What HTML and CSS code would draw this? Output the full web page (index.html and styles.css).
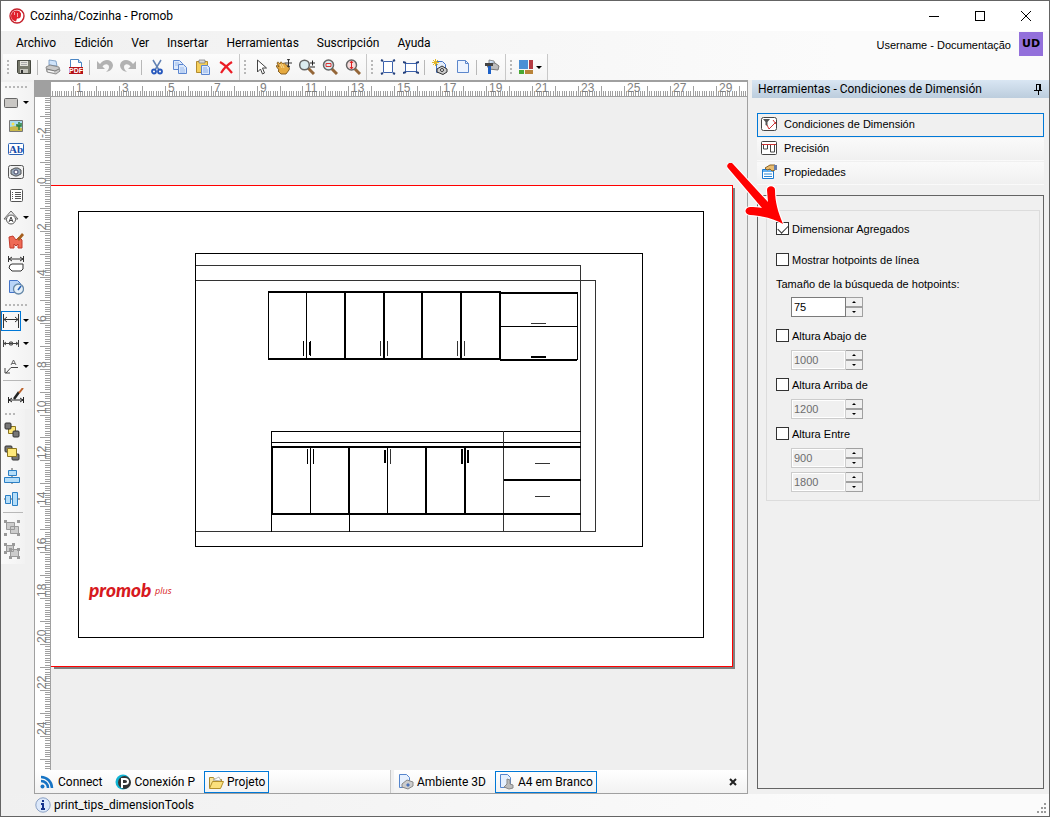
FILE: index.html
```html
<!DOCTYPE html>
<html lang="es">
<head>
    <meta charset="UTF-8">
    <meta name="viewport" content="width=device-width, initial-scale=1.0">
    <title>Cozinha/Cozinha - Promob</title>
    <link rel="stylesheet" href="styles.css">
</head>
<body>
<div class="window">
    <header class="titlebar">
        <svg class="icon" viewBox="0 0 16 16"><circle cx="8" cy="8" r="7" fill="#fff" stroke="#c5202b" stroke-width="1.4"/><path d="M8 2.500a5.500 5.500 0 0 0-1 11l1-3c4 0 4-2 4-5-1-2-2-3-4-3z" fill="#e0222c"/><path d="M8.500 5v4M5.500 4v3" stroke="#f6a5a8"/></svg>
        <h1>Cozinha/Cozinha - Promob</h1>
        <button class="win-btn" aria-label="Minimizar"><svg viewBox="0 0 12 12"><path d="M1 6.500h10" class="line"/></svg></button>
        <button class="win-btn" aria-label="Maximizar"><svg viewBox="0 0 12 12"><path d="M1.500 1.500h9v9h-9z" class="line"/></svg></button>
        <button class="win-btn" aria-label="Cerrar"><svg viewBox="0 0 12 12"><path d="M1 1l10 10M11 1L1 11" class="line smooth"/></svg></button>
    </header>

    <div class="top">
        <div class="top-left">
            <nav class="menu">
                <button>Archivo</button>
                <button>Edición</button>
                <button>Ver</button>
                <button>Insertar</button>
                <button>Herramientas</button>
                <button>Suscripción</button>
                <button>Ayuda</button>
            </nav>
            <div class="toolbar">
                <div class="group">
                    <button aria-label="Guardar"><svg class="icon" viewBox="0 0 16 16"><path d="M1.500 1.500h13v13h-12l-1-1z" fill="#77796c" stroke="#45473f"/><path d="M4 2h8v5H4z" fill="#e3e3dc"/><path d="M5 3.500h6M5 5.500h6" stroke="#aaa"/><path d="M4 10h8v4H4z" fill="#c4c4bc"/><path d="M5 11h2v3H5z" fill="#333"/></svg></button>
                    <i class="sep"></i>
                    <button aria-label="Imprimir"><svg class="icon" viewBox="0 0 16 16"><path d="M4 1l7 1 1 5-8-1z" fill="#cfe3fa" stroke="#6f93bd" stroke-width=".8"/><path d="M1 8l4-2 9 2 1 4-4 3-9-2z" fill="#c9c9c9" stroke="#777" stroke-width=".8"/><path d="M2 10l8 2 4-2" stroke="#777" fill="none"/><path d="M3 12l6 1" stroke="#fff"/></svg></button>
                    <button aria-label="PDF"><svg class="icon" viewBox="0 0 16 16"><path d="M2.500.5h8l3 3v11h-11z" fill="#fff" stroke="#4b86c4"/><path d="M10.500.5v3h3" fill="#cde" stroke="#4b86c4"/><path d="M1 8h14v7H1z" fill="#b4121a"/><text x="8" y="14" class="tiny pdf">PDF</text></svg></button>
                    <i class="sep"></i>
                    <button aria-label="Deshacer"><svg class="icon" viewBox="0 0 16 16"><path d="M0 2v8h8L5.500 7.500C8 4 12 5 12 8c0 2-1 3-3 5 5-1 7-4 7-7C15 0 7-1 3 5z" fill="#b2b2b2"/></svg></button>
                    <button aria-label="Rehacer"><svg class="icon" viewBox="0 0 16 16"><path d="M16 2v8H8l2.500-2.500C8 4 4 5 4 8c0 2 1 3 3 5-5-1-7-4-7-7C1 0 9-1 13 5z" fill="#b2b2b2"/></svg></button>
                    <i class="sep"></i>
                    <button aria-label="Cortar"><svg class="icon" viewBox="0 0 16 16"><path d="M4 1l6 10M12 1L6 11" stroke="#6282b4" stroke-width="1.500"/><g fill="none" stroke="#2758bd" stroke-width="1.800"><circle cx="5" cy="12.500" r="2"/><circle cx="11" cy="12.500" r="2"/></g></svg></button>
                    <button aria-label="Copiar"><svg class="icon" viewBox="0 0 16 16"><g fill="#dce9fb" stroke="#5c86d0"><path d="M1.500 1.500h6l3 3v6h-9z"/><path d="M6.500 5.500h5l3 3v6h-8z"/></g><path d="M3 4h4M3 6h3M8 9h4M8 11h5M8 13h5" stroke="#8badea" stroke-width=".8"/></svg></button>
                    <button aria-label="Pegar"><svg class="icon" viewBox="0 0 16 16"><path d="M1.500 2.500h11v11h-11z" fill="#f5cf5b" stroke="#b28b2f"/><path d="M4 1h6v3H4z" fill="#d8d8d8" stroke="#777" stroke-width=".7"/><path d="M6.500 6.500h6l2 2v7h-8z" fill="#dce9fb" stroke="#5c86d0"/><path d="M8 9h4M8 11h5M8 13h5" stroke="#8badea"/></svg></button>
                    <button aria-label="Eliminar"><svg class="icon" viewBox="0 0 16 16"><path d="M2 3c4 2 8 6 12 11M14 3C9 6 6 9 3 14" fill="none" stroke="#ec1c24" stroke-width="2.200"/></svg></button>
                </div>
                <div class="group">
                    <button aria-label="Seleccionar"><svg class="icon" viewBox="0 0 16 16"><path d="M4.500 1v12l3-3 2 5 2-1-2-5h4z" fill="#fff" stroke="#444"/></svg></button>
                    <button aria-label="Mover"><svg class="icon" viewBox="0 0 16 16"><path d="M0 7c1-1 2 0 3 1L1 4c1-2 2 0 3 1 0-3 2-2 3 0 1-2 2-1 3 1h2c1 2 2 3 1 5l-3 4H5l-3-3 1-1z" fill="#e5a93f" stroke="#7a5318" stroke-width=".9"/><path d="M4 5l2 4M6 5l2 4" stroke="#f9dc96"/><path d="M12.500 0v8M9 4h7M11 1l1.500-1L14 1M11 7l1.500 1L14 7" stroke="#333" fill="none"/></svg></button>
                    <button aria-label="Zoom"><svg class="icon" viewBox="0 0 16 16"><path d="M9 9l6 6" stroke="#946638" stroke-width="3"/><circle cx="5.500" cy="6" r="4.800" fill="#dcecf0" stroke="#666" stroke-width="1.500"/><path d="M11 4h5M13.500 1.500v5M11 8h5" stroke="#222"/></svg></button>
                    <button aria-label="Zoom ventana"><svg class="icon" viewBox="0 0 16 16"><path d="M9 9l6 6" stroke="#946638" stroke-width="3"/><circle cx="6.500" cy="6" r="5" fill="#dcecf0" stroke="#666" stroke-width="1.500"/><path d="M4 4.500h5v3H4z" fill="none" stroke="#d33"/></svg></button>
                    <button aria-label="Zoom todo"><svg class="icon" viewBox="0 0 16 16"><path d="M9 9l6 6" stroke="#946638" stroke-width="3"/><circle cx="6.500" cy="6" r="5" fill="#f6dcdc" stroke="#666" stroke-width="1.500"/><path d="M6.500 2v8M5 4l1.500-2L8 4M5 8l1.500 2L8 8" stroke="#d22" fill="none"/></svg></button>
                </div>
                <div class="group">
                    <button aria-label="Vertical"><svg class="icon" viewBox="0 0 16 16"><path d="M3.500 2.500h9v11h-9z" fill="#fff" stroke="#3c62ac"/><path d="M1 1l2 1M15 1l-2 1M1 15l2-1M15 15l-2-1" stroke="#24407c" stroke-width="2"/></svg></button>
                    <button aria-label="Horizontal"><svg class="icon" viewBox="0 0 16 16"><path d="M2.500 4.500h11v8h-11z" fill="#fff" stroke="#3c62ac"/><path d="M0 3l3 1M16 3l-3 1M0 14l3-1M16 14l-3-1" stroke="#24407c" stroke-width="2"/></svg></button>
                    <i class="sep"></i>
                    <button aria-label="Nueva vista"><svg class="icon" viewBox="0 0 16 16"><path d="M4.500 2.500h6l3 3v8h-9z" fill="#e4eefc" stroke="#4474c8"/><path d="M3.500 0v7M0 3.500h7M1 1l5 5M6 1L1 6" stroke="#e4b928"/><path d="M5 10l5-3 5 3v3l-4 2.500L5 13z" fill="#ccc" stroke="#333"/><circle cx="10" cy="11" r="1.500" fill="#fff" stroke="#333"/></svg></button>
                    <button aria-label="Nueva hoja"><svg class="icon" viewBox="0 0 16 16"><path d="M2.500 1.500h8l3 3v9h-11z" fill="#edf4ff" stroke="#5c87cc"/><path d="M10.500 1.500v3h3" fill="none" stroke="#5c87cc"/></svg></button>
                    <i class="sep"></i>
                    <button aria-label="Configurar"><svg class="icon" viewBox="0 0 16 16"><path d="M5 1l5 1 1 4-6-1z" fill="#cfe3fa" stroke="#777" stroke-width=".8"/><path d="M2 5l9-1 4 3-1 4-9-1z" fill="#bcbcbc" stroke="#777"/><path d="M1 4h8v3H1z" fill="#444"/><path d="M4 7h3v8H4z" fill="#1c60c8"/></svg></button>
                </div>
                <div class="group">
                    <button class="wide" aria-label="Colores"><svg class="icon" viewBox="0 0 16 16"><path d="M1 1h9v9H1z" fill="#4b8fd5"/><path d="M11 1h4v9h-4z" fill="#b53b43"/><path d="M1 11h5v4H1z" fill="#47a832"/><path d="M7 11h8v4H7z" fill="#b98339"/></svg><i class="caret"></i></button>
                </div>
            </div>
        </div>
        <div class="user"><span>Username - Documentação</span><b class="avatar">UD</b></div>
    </div>

    <main class="main">
        <aside class="side">
            <div class="side-group">
                <button class="drop" aria-label="Rectángulo"><svg class="icon" viewBox="0 0 16 16"><rect x="1.500" y="3.500" width="13" height="9" rx="1" fill="#c9c7c4" stroke="#666"/></svg><i class="caret"></i></button>
                <button aria-label="Imagen"><svg class="icon" viewBox="0 0 16 16"><path d="M1.500 2.500h13v11h-13z" fill="#a8dcf2" stroke="#777"/><path d="M2 9l5-1 7 2v3H2z" fill="#c8b84c"/><circle cx="5" cy="6" r="1.500" fill="#f7e14f"/><path d="M11 4v8M9 6v2h4V5" stroke="#2e8038" fill="none" stroke-width="1.500"/></svg></button>
                <button aria-label="Texto"><svg class="icon" viewBox="0 0 16 16"><rect x=".5" y="2.500" width="15" height="11" rx="1" fill="#fff" stroke="#2a62b4"/><text x="8" y="12" class="tiny ab">Ab</text></svg></button>
                <button aria-label="Vista"><svg class="icon" viewBox="0 0 16 16"><rect x=".5" y="1.500" width="15" height="13" rx="2" fill="#f2f2f2" stroke="#555"/><path d="M3 6l4-2h3l3 2v4l-4 2H7l-4-2z" fill="#9ab" stroke="#555"/><circle cx="8" cy="8" r="2" fill="#fff" stroke="#446"/></svg></button>
                <button aria-label="Lista"><svg class="icon" viewBox="0 0 16 16"><rect x="2.500" y="2.500" width="12" height="12" rx="1" fill="#fff" stroke="#555"/><path d="M4 5.500h1M7 5.500h6M4 7.500h1M7 7.500h6M4 9.500h1M7 9.500h6M4 11.500h1M7 11.500h6" stroke="#555"/></svg></button>
                <button class="drop" aria-label="Símbolo"><svg class="icon" viewBox="0 0 16 16"><path d="M8 1l7 8h-3l-4 4-4-4H1z" fill="#eee" stroke="#666"/><circle cx="8" cy="9.500" r="4.500" fill="#fff" stroke="#555"/><path d="M6 12l2-5 2 5M7 10.500h2" fill="none" stroke="#444"/></svg><i class="caret"></i></button>
                <button aria-label="Material"><svg class="icon" viewBox="0 0 16 16"><path d="M1 4l4-1 3 4 3-3 3 3v8h-4v-4l-2 2-2-2v4H2z" fill="#ee6a55" stroke="#c23a2c"/><path d="M9 6l5-6 2 2-5 6z" fill="#a55f1e"/></svg></button>
                <button aria-label="Cota de contorno"><svg class="icon" viewBox="0 0 16 16"><path d="M.5 0v6M15.500 0v6M1 3h14M4 1L1 3l3 2M12 1l3 2-3 2" stroke="#333" fill="none"/><path d="M4 8h11v5l-2 2H4l-3-3 1-3z" fill="#fff" stroke="#333"/></svg></button>
                <button aria-label="Fecha"><svg class="icon" viewBox="0 0 16 16"><path d="M1.500 1.500h8l3 3v9h-11z" fill="#b9d4f8" stroke="#4474c8"/><circle cx="10.500" cy="10" r="5" fill="#e6f0f8" stroke="#6688a8" stroke-width="1.300"/><path d="M13 7l-3 4" stroke="#2760b8" stroke-width="1.500"/></svg></button>
            </div>
            <div class="side-group">
                <button class="drop active" aria-label="Cota"><svg class="icon" viewBox="0 0 16 16"><path d="M.5 1v14M15.500 1v14M1 6.500h14M4 4L1 6.500 4 9M12 4l3 2.500L12 9" stroke="#333" fill="none"/></svg><i class="caret"></i></button>
                <button class="drop" aria-label="Cota continua"><svg class="icon" viewBox="0 0 16 16"><path d="M.5 4v7M15.500 4v7M1 7.500h14M3 6L1 7.500 3 9M13 6l2 1.500L13 9M8 5v5M6 6l2 1.500L10 6M6 9l2-1.500L10 9" stroke="#444" fill="none"/></svg><i class="caret"></i></button>
                <button class="drop" aria-label="Directriz"><svg class="icon" viewBox="0 0 16 16"><path d="M15 8.500H8L3 14M2 9v5h5" stroke="#444" fill="none"/><path d="M8 6l2.500-5L13 6M9 4.500h3" stroke="#666" fill="none"/></svg><i class="caret"></i></button>
                <i class="sep"></i>
                <button aria-label="Editar cota"><svg class="icon" viewBox="0 0 16 16"><path d="M.5 9v6M15.500 9v6M1 12h14M4 10l-3 2 3 2M12 10l3 2-3 2" stroke="#222" fill="none"/><path d="M6 11l5-7" stroke="#222" stroke-width="2.500"/><path d="M11 5l4-5" stroke="#bb6028" stroke-width="2"/></svg></button>
            </div>
            <div class="side-group narrow">
                <button aria-label="Enviar atrás"><svg class="icon" viewBox="0 0 16 16"><path d="M4.500 4.500h7v7h-7z" fill="#ffe97a" stroke="#8a7420"/><rect x="1" y="1" width="6" height="6" rx="1" fill="#777" stroke="#333"/><rect x="9" y="9" width="6" height="6" rx="1" fill="#777" stroke="#333"/></svg></button>
                <button aria-label="Traer adelante"><svg class="icon" viewBox="0 0 16 16"><rect x="1" y="1" width="7" height="6" rx="1" fill="#777" stroke="#333"/><rect x="8" y="9" width="7" height="6" rx="1" fill="#777" stroke="#333"/><path d="M3.500 3.500h9v8h-9z" fill="#ffe97a" stroke="#8a7420"/></svg></button>
                <button aria-label="Centrar vertical"><svg class="icon" viewBox="0 0 16 16"><path d="M8 0v16" stroke="#555"/><path d="M4.500 2.500h8v5h-8zM.5 9.500h15v5H.5z" fill="#b5def9" stroke="#2b7fc4"/></svg></button>
                <button aria-label="Centrar horizontal"><svg class="icon" viewBox="0 0 16 16"><path d="M0 8h16" stroke="#555"/><path d="M1.500 4.500h5v8h-5zM8.500 1.500h5v13h-5z" fill="#b5def9" stroke="#2b7fc4"/></svg></button>
                <i class="sep"></i>
                <button aria-label="Agrupar" disabled><svg class="icon" viewBox="0 0 16 16"><path d="M2.500 2.500h8v7h-8zM6.500 6.500h8v7h-8z" fill="#ccc" stroke="#999"/><path d="M0 0h3v3H0zM13 0h3v3h-3zM0 13h3v3H0zM13 13h3v3h-3z" fill="#999"/></svg></button>
                <button aria-label="Desagrupar" disabled><svg class="icon" viewBox="0 0 16 16"><path d="M2.500 2.500h7v6h-7zM6.500 6.500h8v7h-8z" fill="#ccc" stroke="#999"/><path d="M0 0h3v3H0zM8 0h3v3H8zM0 8h3v3H0zM5 5h3v3H5zM13 5h3v3h-3zM5 13h3v3H5zM13 13h3v3h-3z" fill="#999"/></svg></button>
            </div>
        </aside>

        <section class="document">
            <div class="workspace">
                <div class="corner"></div>
                <svg class="ruler ruler-h" id="rulerH"></svg>
                <svg class="ruler ruler-v" id="rulerV"></svg>
                <div class="canvas">
                    <svg class="drawing" viewBox="51 97 696 672" width="696" height="672">
                        <!-- sheet -->
                        <path d="M54 188h681v481H54z" fill="#808080"/>
                        <path d="M40 185h693v482H40z" fill="#f00"/>
                        <path d="M40 186h692v480H40z" fill="#fff"/>
                        <g class="thin">
                            <path d="M78.500 211.500h625v426h-625z"/>
                            <path d="M195.500 253.500h447v293h-447z"/>
                        </g>
                        <!-- walls -->
                        <path class="wall" d="M196 265.500h385M580.500 265v267M196 280.500h400M595.500 280v252M196 531.500h400"/>
                        <!-- upper cabinets -->
                        <path class="thin" d="M268.500 291v69M306.500 292v67M501 326.500h76M577.500 292v68M303.500 341v15M309.500 342v13M310.500 341v15"/>
                        <path class="wall" d="M380.500 341v15M387.500 341v15M457.500 341v15M464.500 341v15M531 323.500h15"/>
                        <path class="thick" d="M268 292h233M268 359h233M500 293h77M500 360h77M345 292v67M384 292v67M422 292v67M461 292v67M500 292v68M531 357h15"/>
                        <!-- base cabinets -->
                        <path class="thin" d="M271.500 431v101M272.500 447v66M272 431.500h309M272 442.500h309M310.500 447v66M387.500 447v66M349.500 513v19M307.500 449v15M313.500 449v15"/>
                        <path class="wall" d="M503.500 431v101M390.500 449v15M535 463.500h15M535 496.500h15"/>
                        <path class="thick" d="M272 447h309M272 514h309M349 447v67M426 447v67M465 447v67M504 480h77M385 450v13M462 449v15M468 450v13"/>
                        <text x="89" y="597" class="brand">promob</text>
                        <text x="155" y="594" class="brand-plus">plus</text>
                    </svg>
                </div>
            </div>
            <div class="tabs">
                <div class="tab-strip projects">
                    <button><svg class="icon" viewBox="0 0 16 16"><circle cx="3.500" cy="12.500" r="2" fill="#1774c4"/><path d="M2 7c4 0 7 3 7 7M2 3c6 0 11 5 11 11" fill="none" stroke="#1774c4" stroke-width="2.500"/></svg>Connect</button>
                    <button><svg class="icon" viewBox="0 0 16 16"><circle cx="8" cy="8" r="7.500" fill="#10b4d4"/><circle cx="9.500" cy="8.500" r="6.500" fill="#333"/><path d="M7 14V5h3c4 0 4 5 0 5H8" fill="none" stroke="#fff" stroke-width="2"/></svg>Conexión P</button>
                    <button class="active"><svg class="icon" viewBox="0 0 16 16"><path d="M1.500 14V3.500h4l1 2h7V8" fill="#f8e49a" stroke="#a88a2c"/><path d="M5 6l6-3 2 4z" fill="#fff" stroke="#999" stroke-width=".7"/><path d="M1.500 14.500l3-7h11l-3 7z" fill="#fbe07c" stroke="#b3902b"/></svg>Projeto</button>
                </div>
                <div class="tab-strip views">
                    <button><svg class="icon" viewBox="0 0 16 16"><path d="M1.500.5h7l3 3v10h-10z" fill="#e6f0fe" stroke="#5585cc"/><path d="M4 10l5-4 6 2v4l-5 3-6-2z" fill="#ccc" stroke="#888"/><path d="M8 11l2-2 2 2-2 2z" fill="#4a72ba"/></svg>Ambiente 3D</button>
                    <button class="active"><svg class="icon" viewBox="0 0 16 16"><path d="M1.500.5h7l3 3v10h-10z" fill="#e6f0fe" stroke="#5585cc"/><path d="M8 5l3 1v4l3 1v3l-4 1-5-2 3-3z" fill="#bbb" stroke="#888"/></svg>A4 em Branco</button>
                    <button class="close" aria-label="Cerrar vista"><svg viewBox="0 0 8 8"><path d="M1 1l6 6M7 1L1 7"/></svg></button>
                </div>
            </div>
        </section>

        <aside class="panel">
            <h2>Herramientas - Condiciones de Dimensión
                <svg viewBox="0 0 8 12"><path d="M2.500 7V1.500h4V7M5.500 2v5M0 7.500h8M4.500 8v4"/></svg>
            </h2>
            <div class="panel-body">
                <div class="sections">
                    <button class="active"><svg class="icon" viewBox="0 0 16 16"><rect x=".5" y="1.500" width="15" height="13" rx="2" fill="#fff" stroke="#444"/><path d="M2 3h7L6.500 6v4l-2-1V6z" fill="#555"/><path d="M6 9l2 4 7-7M12 4l3 4" stroke="#c33" fill="none"/></svg>Condiciones de Dimensión</button>
                    <button><svg class="icon" viewBox="0 0 16 16"><rect x=".5" y="1.500" width="15" height="13" rx="1" fill="#fff" stroke="#444"/><path d="M1 4.500h14" stroke="#c33"/><path d="M2.500 5v4h4V5M9.500 5v7h4V5" stroke="#444" fill="none"/></svg>Precisión</button>
                    <button><svg class="icon" viewBox="0 0 16 16"><path d="M1.500 5.500h11v9h-11z" fill="#fff" stroke="#1b7ad0"/><path d="M2 6h10v2H2z" fill="#62aff0"/><path d="M3 10h8M3 12.500h8" stroke="#2c88d6"/><path d="M4 4l5-3h5v5l-3 1-2-2-3 1z" fill="#e8bc70" stroke="#8c6428"/><path d="M13 1h3v5h-3z" fill="#667ba8"/></svg>Propiedades</button>
                </div>
                <div class="properties">
                    <form class="fields">
                        <label class="check"><input type="checkbox" checked>Dimensionar Agregados</label>
                        <label class="check"><input type="checkbox">Mostrar hotpoints de línea</label>
                        <label class="caption" for="hotpoints">Tamaño de la búsqueda de hotpoints:</label>
                        <div class="spin"><input type="number" id="hotpoints" value="75"><div class="arrows"><button type="button" aria-label="Más"></button><button type="button" aria-label="Menos"></button></div></div>
                        <label class="check"><input type="checkbox">Altura Abajo de</label>
                        <div class="spin"><input type="number" aria-label="Altura Abajo de" value="1000" disabled><div class="arrows"><button type="button" aria-label="Más"></button><button type="button" aria-label="Menos"></button></div></div>
                        <label class="check"><input type="checkbox">Altura Arriba de</label>
                        <div class="spin"><input type="number" aria-label="Altura Arriba de" value="1200" disabled><div class="arrows"><button type="button" aria-label="Más"></button><button type="button" aria-label="Menos"></button></div></div>
                        <label class="check"><input type="checkbox">Altura Entre</label>
                        <div class="spin"><input type="number" aria-label="Altura mínima" value="900" disabled><div class="arrows"><button type="button" aria-label="Más"></button><button type="button" aria-label="Menos"></button></div></div>
                        <div class="spin"><input type="number" aria-label="Altura máxima" value="1800" disabled><div class="arrows"><button type="button" aria-label="Más"></button><button type="button" aria-label="Menos"></button></div></div>
                    </form>
                    <svg class="pointer" viewBox="0 0 60 64"><path d="M1 5a3 3 0 0 1 5-4L41 39L40 27c0-5 8-5 8 0 0 12 3 22 8 34-9-5-19-8-33-9-6-1-6-7 0-8 4 0 8 0 12 1z" fill="#f00" stroke="#fff" stroke-width="2" paint-order="stroke"/></svg>
                </div>
            </div>
        </aside>
    </main>

    <footer class="status">
        <svg class="icon" viewBox="0 0 16 16"><circle cx="8" cy="8" r="7.200" fill="#dce8fa" stroke="#8aa0c4"/><path d="M8 3v2M6 7h2v5M6 12h4" stroke="#16338c" stroke-width="2" fill="none"/></svg>
        <span>print_tips_dimensionTools</span>
        <svg class="sizegrip" viewBox="0 0 9 11"><path d="M7 0h2v2H7zM4 4h2v2H4zM7 4h2v2H7zM0 8h2v2H0zM4 8h2v2H4zM7 8h2v2H7z" fill="#9a9a9a"/></svg>
    </footer>
</div>
<script>
// rulers: one long tick per centimetre, short ones per millimetre
const CM = 22.95;

function drawRuler(svg, vertical, origin, first, labels) {
    const length = vertical ? svg.clientHeight : svg.clientWidth;
    let html = '';
    for (let mm = first; ; mm++) {
        const pos = Math.round(origin + mm * CM / 10);
        if (pos >= length) break;
        if (pos < 0) continue;
        const size = mm % 10 === 0 ? 10 : 5;
        html += vertical
            ? `<rect x="${15 - size}" y="${pos}" width="${size}" height="1"/>`
            : `<rect x="${pos}" y="${14 - size}" width="1" height="${size}"/>`;
    }
    for (const n of labels) {
        const pos = Math.round(origin + n * CM);
        html += vertical
            ? `<text transform="translate(11 ${pos - 1}) rotate(-90)">${n}</text>`
            : `<text x="${pos + 3}" y="10">${n}</text>`;
    }
    svg.innerHTML = html;
}

const odd = [1, 3, 5, 7, 9, 11, 13, 15, 17, 19, 21, 23, 25, 27, 29];
const even = [-2, 0, 2, 4, 6, 8, 10, 12, 14, 16, 18, 20, 22, 24];
drawRuler(document.getElementById('rulerH'), false, -1, 0, odd);
drawRuler(document.getElementById('rulerV'), true, 88, -40, even);
</script>
</body>
</html>
```
FILE: styles.css
```css
* {
    box-sizing: border-box;
}

body {
    margin: 0;
    background: #fff;
    font-family: Roboto, "Open Sans", sans-serif;
    font-size: 12px;
    color: #000;
}

button {
    margin: 0;
    padding: 0;
    border: 0;
    background: none;
    font: inherit;
    color: inherit;
}

.icon {
    width: 16px;
    height: 16px;
    flex: none;
}

.window {
    display: flex;
    flex-direction: column;
    height: calc(100vh - 9px);
    margin-right: 7px;
    border: 1px solid #646464;
    background: #f0f0f0;
}

/* title bar */
.titlebar {
    display: flex;
    align-items: center;
    height: 30px;
    padding-left: 8px;
    background: #fff;
}

.titlebar h1 {
    flex: 1;
    margin: 0 0 0 5px;
    font-size: 12px;
    font-weight: normal;
}

.win-btn {
    width: 46px;
    height: 30px;
}

.win-btn svg {
    width: 12px;
    height: 12px;
    display: block;
    margin: auto;
}

.line {
    fill: none;
    stroke: #000;
    shape-rendering: crispEdges;
}

.smooth {
    shape-rendering: auto;
}

/* menu and tool bars */
.top {
    display: flex;
    justify-content: space-between;
    background: linear-gradient(90deg, #f0f0f0, #fbfbfb 80%);
}

.menu {
    display: flex;
    height: 23px;
    padding-left: 6px;
}

.menu button {
    padding: 0 9px;
}

.toolbar {
    display: flex;
    height: 26px;
    padding-left: 2px;
}

.group {
    display: flex;
    align-items: center;
    position: relative;
    padding: 0 2px 0 9px;
    border-right: 1px solid #c8c8c8;
    background: linear-gradient(#fcfcfc, #f4f4f4);
}

.group::before,
.side-group::before {
    content: "";
    position: absolute;
    left: 4px;
    top: 6px;
    width: 2px;
    height: 15px;
    background: repeating-linear-gradient(#b8b8b8 0 2px, transparent 2px 4px);
}

.group button {
    display: flex;
    align-items: center;
    justify-content: center;
    width: 23px;
    height: 24px;
}

.group .wide {
    width: 30px;
    gap: 2px;
}

.group .sep {
    width: 2px;
    height: 15px;
    margin: 0 2px;
    border-left: 1px solid #b8b8b8;
}

.caret {
    border: 3px solid transparent;
    border-top-color: #000;
    border-bottom: 0;
}

.tiny {
    text-anchor: middle;
    font-weight: bold;
}

.pdf {
    fill: #fff;
    font-family: "Liberation Sans", sans-serif;
    font-size: 7px;
}

.ab {
    fill: #1449a8;
    font-family: "Liberation Serif", serif;
    font-size: 11px;
}

.user {
    display: flex;
    gap: 8px;
    padding: 1px 6px 0 0;
    font-family: "Liberation Sans", Arial, sans-serif;
    font-size: 11px;
    line-height: 26px;
}

.avatar {
    width: 24px;
    height: 24px;
    background: #9370db;
    font-family: "DejaVu Sans", sans-serif;
    line-height: 23px;
    text-align: center;
}

/* main area */
.main {
    display: flex;
    flex: 1;
    min-height: 0;
}

.side {
    width: 33px;
    padding-top: 2px;
}

.side-group {
    position: relative;
    width: 32px;
    padding: 9px 0 2px;
    background: linear-gradient(90deg, #fafafa, #f2f2f2);
}

.side-group::before {
    top: 4px;
    width: 22px;
    height: 2px;
    background: repeating-linear-gradient(90deg, #b8b8b8 0 2px, transparent 2px 4px);
}

.narrow {
    width: 24px;
}

.narrow::before {
    width: 10px;
}

.side-group button {
    display: flex;
    align-items: center;
    justify-content: center;
    width: 29px;
    height: 23px;
}

.narrow button {
    width: 22px;
}

.side-group .drop {
    gap: 4px;
    padding-left: 1px;
}

.side-group .active .icon {
    outline: 1px solid #0078d7;
    outline-offset: 1px;
}

.side-group .sep {
    display: block;
    height: 2px;
    margin: 2px;
    border-top: 1px solid #b8b8b8;
}

.document {
    display: flex;
    flex-direction: column;
    flex: 1;
    min-width: 0;
    border: 1px solid #a0a0a0;
    border-top-width: 2px;
}

.workspace {
    display: grid;
    grid-template: 15px 1fr / 16px 1fr;
    flex: 1;
    min-height: 0;
}

.corner {
    background: #a0a0a0;
}

.ruler {
    display: block;
    width: 100%;
    height: 100%;
    background: #fff;
    fill: #a0a0a0;
    font-family: "Liberation Sans", Arial, sans-serif;
    font-size: 12px;
}

.ruler text {
    fill: #808080;
}

.ruler-h {
    border-bottom: 1px solid #a0a0a0;
}

.ruler-v {
    border-right: 1px solid #a0a0a0;
}

.canvas {
    overflow: hidden;
    background: #efefef;
}

.drawing {
    display: block;
}

.thin,
.thick,
.wall {
    fill: none;
    stroke: #000;
    shape-rendering: crispEdges;
}

.thick {
    stroke-width: 2;
}

.wall {
    stroke: #333;
}

.brand,
.brand-plus {
    fill: #d71920;
    font-style: italic;
}

.brand {
    font-family: Lato, sans-serif;
    font-size: 19px;
    font-weight: 900;
}

.brand-plus {
    font-family: "Open Sans", sans-serif;
    font-size: 9px;
}

/* bottom tabs */
.tabs {
    display: flex;
    height: 23px;
}

.tab-strip {
    display: flex;
    background: linear-gradient(#fff, #f2f2f2);
}

.projects {
    width: 356px;
    gap: 5px;
    border-right: 1px solid #c8c8c8;
}

.views {
    flex: 1;
    gap: 5px;
    margin-left: 3px;
}

.tab-strip button {
    display: flex;
    align-items: center;
    gap: 3px;
    height: 22px;
    margin-top: 1px;
    padding: 0 3px;
    border: 1px solid transparent;
}

.tab-strip .active {
    border-color: #0078d7;
}

.tab-strip .close {
    margin-left: auto;
    padding: 0 9px;
}

.close svg {
    width: 8px;
    height: 8px;
    stroke: #222;
    stroke-width: 2;
}

/* tool panel */
.panel {
    display: flex;
    flex-direction: column;
    width: 297px;
    margin-left: 4px;
}

.panel h2 {
    display: flex;
    align-items: center;
    justify-content: space-between;
    height: 18px;
    margin: 0;
    padding: 0 7px 0 6px;
    background: linear-gradient(#d9e6f3, #bccddd);
    font-size: 12px;
    font-weight: normal;
}

.panel h2 svg {
    width: 8px;
    height: 12px;
    fill: none;
    stroke: #000;
    shape-rendering: crispEdges;
}

.panel-body {
    display: flex;
    flex-direction: column;
    flex: 1;
    gap: 10px;
    padding: 15px 5px 5px;
    font-family: "Liberation Sans", Arial, sans-serif;
    font-size: 11px;
}

.sections button {
    display: flex;
    align-items: center;
    gap: 7px;
    width: 100%;
    height: 24px;
    padding: 0 3px 2px;
    border: 1px solid transparent;
    background: linear-gradient(#fafafa, #f0f0f0);
}

.sections .active {
    border-color: #0078d7;
    background: #f0f0f0;
}

.properties {
    position: relative;
    flex: 1;
    padding: 14px 3px 0 8px;
    border: 1px solid #646464;
}

.fields {
    display: flex;
    flex-direction: column;
    padding: 11px 9px 8px;
    border: 1px solid #dcdcdc;
}

.check {
    display: flex;
    align-items: center;
    gap: 3px;
    height: 13px;
}

.check + .check {
    margin-top: 18px;
}

.check input {
    appearance: none;
    width: 13px;
    height: 13px;
    margin: 0;
    border: 1px solid #333;
    background: #fff;
}

.check input:checked::before {
    content: "";
    display: block;
    width: 9px;
    height: 5px;
    margin: 2px 1px;
    border: solid #333;
    border-width: 0 0 1px 1px;
    transform: rotate(-45deg);
}

.caption {
    margin-top: 11px;
    line-height: 14px;
}

.spin {
    display: flex;
    width: 72px;
    height: 20px;
    margin: 8px 0 8px 15px;
}

.caption + .spin {
    margin-top: 6px;
    margin-bottom: 12px;
}

.spin + .spin {
    margin-top: -4px;
    margin-bottom: 0;
}

.spin input {
    appearance: textfield;
    width: 55px;
    padding: 0 2px;
    border: 1px solid #7a7a7a;
    border-radius: 0;
    background: #fff;
    font-family: inherit;
    font-size: 11px;
}

.spin input::-webkit-inner-spin-button {
    appearance: none;
}

.spin input:disabled {
    border-color: #ccc;
    background: #f0f0f0;
    box-shadow: inset 0 0 0 1px #fff;
    color: #6d6d6d;
}

.arrows {
    display: flex;
    flex-direction: column;
    width: 17px;
}

.arrows button {
    flex: 1;
    border: 1px solid #a0a0a0;
    border-left: 0;
}

.arrows button::before {
    content: "";
    display: block;
    width: 0;
    margin: auto;
    border: 2px solid transparent;
    border-top: 0;
    border-bottom-color: #000;
}

.arrows button:last-child::before {
    border-top: 2px solid #000;
    border-bottom: 0;
}

/* red arrow over the first check box */
.pointer {
    position: absolute;
    left: -31px;
    top: -33px;
    width: 60px;
    height: 64px;
}

/* status bar */
.status {
    display: flex;
    align-items: center;
    gap: 3px;
    height: 22px;
    padding: 0 3px 0 34px;
    background: linear-gradient(90deg, #f0f0f0, #fbfbfb 80%);
}

.sizegrip {
    width: 9px;
    height: 11px;
    margin: 6px 0 0 auto;
}
```
